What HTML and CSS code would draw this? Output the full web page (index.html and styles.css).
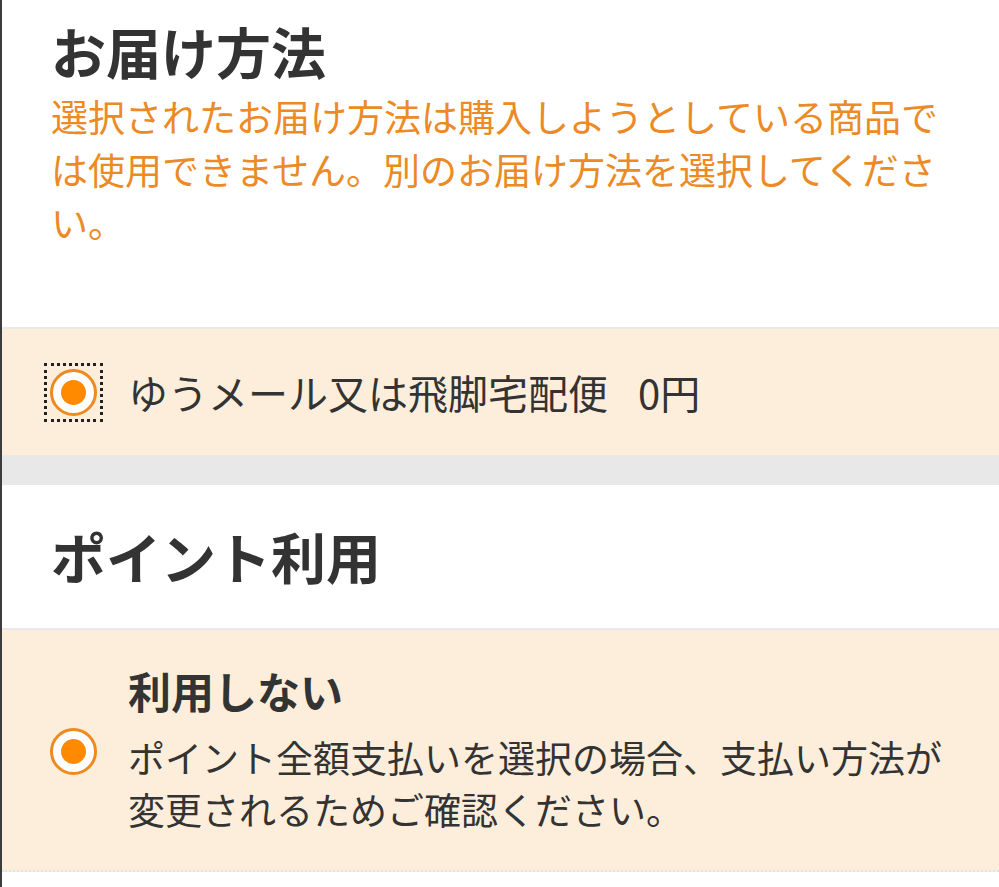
FILE: index.html
```html
<!DOCTYPE html>
<html lang="ja">
<head>
  <meta charset="UTF-8">
  <meta name="viewport" content="width=device-width, initial-scale=1.0">
  <title>お届け方法</title>
  <link rel="stylesheet" href="styles.css">
</head>
<body>
  <div class="page">
    <section class="block delivery">
      <h2 class="block-title">お届け方法</h2>
      <p class="warning">選択されたお届け方法は購入しようとしている商品では使用できません。別のお届け方法を選択してください。</p>
    </section>

    <label class="option option-single">
      <span class="radio-wrap is-focused"><span class="radio"><span class="radio-dot"></span></span></span>
      <span class="option-label">ゆうメール又は飛脚宅配便<span class="price">0円</span></span>
    </label>

    <div class="spacer"></div>

    <section class="block points">
      <h2 class="block-title">ポイント利用</h2>
    </section>

    <label class="option option-detail">
      <span class="radio-wrap"><span class="radio"><span class="radio-dot"></span></span></span>
      <span class="option-body">
        <span class="option-title">利用しない</span>
        <span class="option-desc">ポイント全額支払いを選択の場合、支払い方法が変更されるためご確認ください。</span>
      </span>
    </label>
  </div>
</body>
</html>
```

FILE: styles.css
```css
body {
  margin: 0;
  background: #fff;
  color: #333;
  font-family: "Noto Sans CJK JP", "Noto Sans", sans-serif;
}
.page {
  min-height: 887px;
  border-left: 2px solid #3c3c3c;
}
.block {
  background: #fff;
  padding: 15px 50px 0 49px;
}
.block-title {
  margin: 0;
  font-size: 55px;
  line-height: 70px;
  font-weight: 700;
  color: #333;
}
.delivery {
  padding-bottom: 78px;
}
.warning {
  margin: 5px 0 0 0;
  font-size: 37px;
  line-height: 53px;
  color: #ec8a25;
}
.points {
  padding-top: 35px;
  padding-bottom: 38px;
}
.option {
  display: flex;
  align-items: center;
  background: #fdeedc;
  border-top: 2px solid #e8e8e8;
  padding: 0 50px 0 44px;
}
.option-single {
  height: 126px;
}
.option-detail {
  padding-top: 37px;
  padding-bottom: 35px;
  border-bottom: 2px dotted #e2e2e2;
}
.radio-wrap {
  flex: none;
  padding: 4px;
  margin-right: 27px;
  display: flex;
}
.is-focused {
  outline: 3px dotted #222;
  outline-offset: -1px;
}
.radio {
  width: 47px;
  height: 47px;
  box-sizing: border-box;
  border: 3px solid #ee8a1e;
  border-radius: 50%;
  background: #fff;
  display: flex;
  align-items: center;
  justify-content: center;
}
.radio-dot {
  width: 25px;
  height: 25px;
  border-radius: 50%;
  background: #ff8a00;
}
.option-label {
  font-size: 40px;
  line-height: 50px;
  color: #333;
}
.price {
  margin-left: 30px;
}
.option-body {
  display: flex;
  flex-direction: column;
}
.option-title {
  font-size: 43px;
  line-height: 46px;
  font-weight: 700;
  margin-bottom: 18px;
}
.option-desc {
  font-size: 37px;
  line-height: 52px;
}
.spacer {
  height: 30px;
  background: #e8e8e8;
}
```
